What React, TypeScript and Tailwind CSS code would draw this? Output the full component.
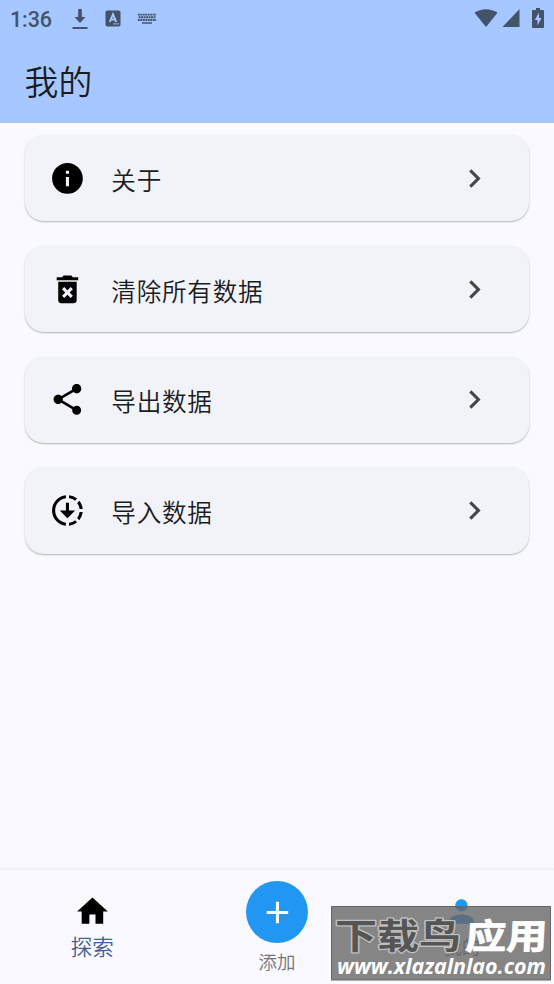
import type { ComponentType, SVGProps } from 'react';
import {
  MdAdd,
  MdChevronRight,
  MdDeleteForever,
  MdDownloading,
  MdHome,
  MdInfo,
  MdPerson,
  MdShare,
} from 'react-icons/md';

interface MenuItem {
  label: string;
  icon: ComponentType<SVGProps<SVGSVGElement>>;
}

const MENU_ITEMS: MenuItem[] = [
  { label: '关于', icon: MdInfo },
  { label: '清除所有数据', icon: MdDeleteForever },
  { label: '导出数据', icon: MdShare },
  { label: '导入数据', icon: MdDownloading },
];

function DownloadIcon() {
  return (
    <svg width="16" height="22" viewBox="0 0 16 22" fill="currentColor" className="ml-[20px]">
      <path d="M6.2 1h3.6v8h3.7L8 15 2.5 9h3.7zM.5 19h15v2H.5z" />
    </svg>
  );
}

function InputMethodIcon() {
  return (
    <svg width="16" height="17" viewBox="0 0 16 17" className="ml-[17.5px]">
      <rect x=".5" y=".5" width="15" height="16" rx="1.8" fill="currentColor" />
      <path d="M4.7 12 8 4.2 11.3 12M6 9.5h4" fill="none" stroke="#a6c7ff" strokeWidth="1.9" />
      <path d="M8.5 13.3h1.3v1.3H8.5zM10.6 13.3h1.3v1.3h-1.3zM12.7 13.3H14v1.3h-1.3z" fill="#a6c7ff" />
    </svg>
  );
}

function KeyboardIcon() {
  return (
    <svg width="20" height="12" viewBox="0 0 20 12" fill="none" stroke="currentColor" className="ml-[16px]">
      <path d="M.8 1.6h18.4M1.6 4.3h17M.8 7h18.4" strokeWidth="1.9" strokeDasharray="1.9 .6" />
      <path d="M5 10h10" strokeWidth="1.5" />
    </svg>
  );
}

function StatusBar() {
  return (
    <div className="flex h-[37px] items-center pr-[10px] pl-[10px] text-[#43536b]">
      <span className="w-[41.5px] pt-[2px] font-[Roboto,sans-serif] text-[21.5px] leading-none font-medium tracking-[-0.1px]">
        1:36
      </span>
      <DownloadIcon />
      <InputMethodIcon />
      <KeyboardIcon />
      <div className="ml-auto flex items-center pb-[1px]">
        <svg width="24" height="20" viewBox="0 0 24 20" fill="currentColor">
          <path d="M.5 4.8C7-.1 17-.1 23.500 4.800L12 19z" />
        </svg>
        <svg width="18" height="20" viewBox="0 0 18 20" fill="currentColor" className="ml-1">
          <path d="M17.500 1v18H.5z" />
        </svg>
        <svg width="12" height="20" viewBox="0 0 12 20" fill="currentColor" className="ml-[12px]">
          <path d="M4 0h4v2h3q1 0 1 1v16q0 1-1 1H1q-1 0-1-1V3q0-1 1-1h3z" />
          <path d="M7 4.500 2.800 12h2.700v5.500L9.500 10H7z" fill="#a6c7ff" />
        </svg>
      </div>
    </div>
  );
}

function MenuCard({ label, icon: Icon }: MenuItem) {
  return (
    <li className="flex h-[86.2px] items-center rounded-[18.5px] bg-[#f2f3f9] pr-[36.9px] pl-[24.6px] shadow-[0_1px_2px_rgba(0,0,0,0.22),0_1px_1px_rgba(0,0,0,0.08)]">
      <Icon className="size-[36.9px] text-black" />
      <span className="ml-[25.2px] pt-[2.4px] text-[24.6px] leading-[37px] font-[350] tracking-[0.77px] text-[#191c20]">
        {label}
      </span>
      <MdChevronRight className="ml-auto size-[36.9px] text-[#42474e]" />
    </li>
  );
}

function Watermark() {
  return (
    <svg
      width="220"
      height="75"
      viewBox="0 0 220 75"
      className="absolute top-[36px] left-[331px]"
      fontFamily="'Noto Sans CJK SC', sans-serif"
    >
      <rect x=".5" y=".5" width="219" height="73.500" fill="#666" fillOpacity=".79" stroke="#666" />
      <g fontSize="35" fontWeight="700" strokeLinejoin="round">
        <text
          x="4"
          y="43"
          textLength="126"
          lengthAdjust="spacingAndGlyphs"
          fill="#555"
          stroke="#c0c0c0"
          strokeWidth="2.6"
          paintOrder="stroke"
        >
          下载鸟
        </text>
        <text
          x="136"
          y="43"
          textLength="82"
          lengthAdjust="spacingAndGlyphs"
          fill="#fff"
          stroke="#fff"
          strokeWidth=".8"
          transform="skewX(-3)"
        >
          应用
        </text>
      </g>
      <text
        x="6"
        y="68"
        textLength="209"
        lengthAdjust="spacingAndGlyphs"
        fontFamily="'Open Sans', sans-serif"
        fontSize="21"
        fontWeight="700"
        fontStyle="italic"
        fill="#fff"
      >
        www.xlazalnlao.com
      </text>
    </svg>
  );
}

function BottomNav() {
  return (
    <nav className="relative grid h-[115px] grid-cols-3 border-t border-[#f0f0f4] bg-[#faf9ff] shadow-[0_-1px_2px_rgba(0,0,0,0.04)]">
      <div className="flex flex-col items-center pt-[23px]">
        <MdHome className="size-[36.9px] text-black" />
        <span className="text-[21.5px] leading-[32px] font-[350] text-[#415f91]">探索</span>
      </div>
      <div className="flex flex-col items-center pt-[11px]">
        <div className="flex size-[62px] items-center justify-center rounded-full bg-[#2196f3]">
          <MdAdd className="size-[36.9px] text-white" />
        </div>
        <span className="mt-[4.5px] text-[18.5px] leading-[27px] font-[350] text-[#757575]">添加</span>
      </div>
      <div className="flex flex-col items-center pt-[23px]">
        <MdPerson className="size-[36.9px] text-[#2196f3]" />
        <span className="text-[18.5px] leading-[32px] font-[350] text-[#666]">我的</span>
      </div>
      <Watermark />
    </nav>
  );
}

export default function App() {
  return (
    <div className="flex h-[984px] w-[554px] flex-col overflow-hidden bg-[#faf9ff] font-['Noto_Sans_CJK_SC',sans-serif]">
      <header className="h-[123px] shrink-0 bg-[#a6c7ff]">
        <StatusBar />
        <h1 className="pt-[19px] pl-[24.6px] text-[33.8px] leading-[50px] font-[350] text-[#191c20]">我的</h1>
      </header>
      <main className="flex-1 px-[24.6px] pt-[12.3px]">
        <ul className="flex flex-col gap-[24.5px]">
          {MENU_ITEMS.map((item) => (
            <MenuCard key={item.label} {...item} />
          ))}
        </ul>
      </main>
      <BottomNav />
    </div>
  );
}
